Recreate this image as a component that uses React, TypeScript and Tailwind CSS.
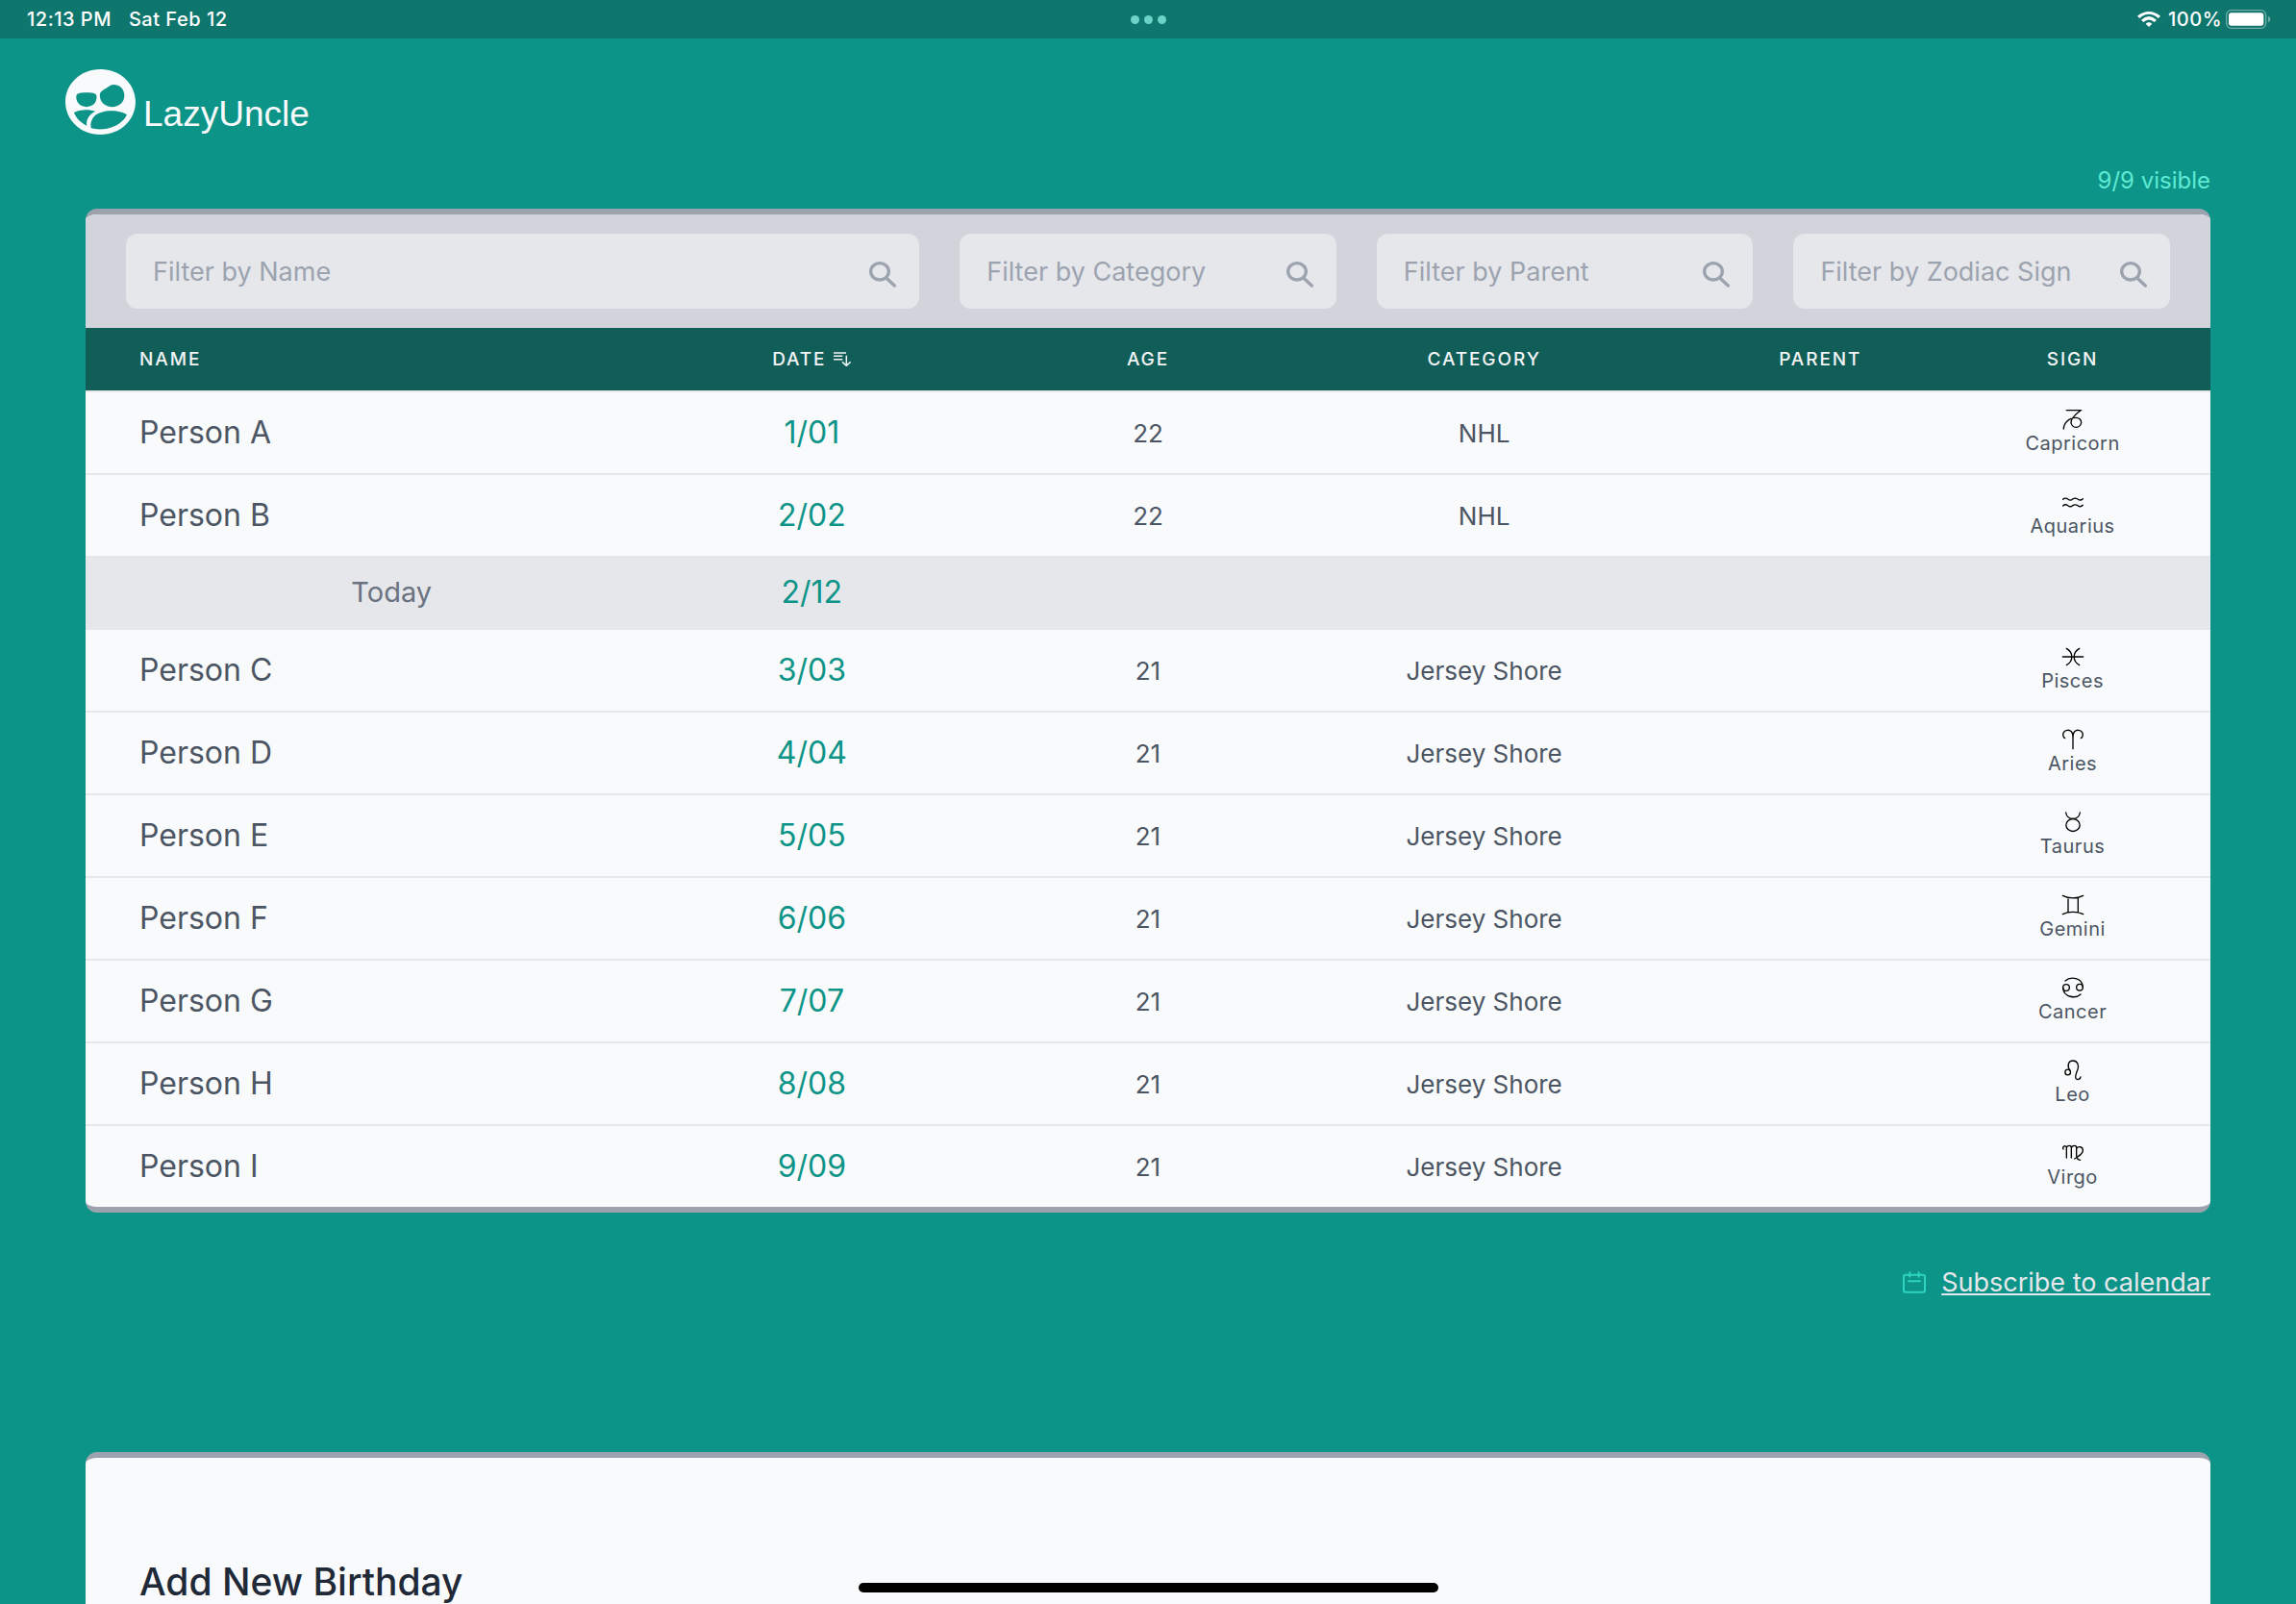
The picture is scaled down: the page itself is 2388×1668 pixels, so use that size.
import React from "react";

type Person = { name: string; date: string; age: number; category: string; parent: string; sign: string };

const people: Person[] = [
  { name: "Person A", date: "1/01", age: 22, category: "NHL", parent: "", sign: "Capricorn" },
  { name: "Person B", date: "2/02", age: 22, category: "NHL", parent: "", sign: "Aquarius" },
  { name: "Person C", date: "3/03", age: 21, category: "Jersey Shore", parent: "", sign: "Pisces" },
  { name: "Person D", date: "4/04", age: 21, category: "Jersey Shore", parent: "", sign: "Aries" },
  { name: "Person E", date: "5/05", age: 21, category: "Jersey Shore", parent: "", sign: "Taurus" },
  { name: "Person F", date: "6/06", age: 21, category: "Jersey Shore", parent: "", sign: "Gemini" },
  { name: "Person G", date: "7/07", age: 21, category: "Jersey Shore", parent: "", sign: "Cancer" },
  { name: "Person H", date: "8/08", age: 21, category: "Jersey Shore", parent: "", sign: "Leo" },
  { name: "Person I", date: "9/09", age: 21, category: "Jersey Shore", parent: "", sign: "Virgo" },
];

const zodiac: Record<string, React.ReactNode> = {
  Capricorn: <path d="M13 5H57C44 17 27 27 27 43a16 15 0 1 0 16-15C20 28 4 45 4 63" />,
  Aquarius: (
    <path d="M2 25C6 21 13 21 17 24C22 28 28 28 32 24C38 20 43 21 48 24C53 28 59 28 64 23M2 45C6 41 13 41 17 44C22 48 28 48 32 44C38 40 43 41 48 44C53 48 59 48 64 43" />
  ),
  Pisces: <path d="M1 33H65M13 7C35 20 35 46 13 59M53 7C31 20 31 46 53 59" />,
  Aries: (
    <path d="M8 29C2 26 1 17 4 11C9 2 22 2 28 8C32 12 33 18 33 28V62M58 29C64 26 65 17 62 11C57 2 44 2 38 8C34 12 33 18 33 28" />
  ),
  Taurus: (
    <>
      <ellipse cx="33" cy="42" rx="21.5" ry="19.5" />
      <path d="M11 3C13 15 22 22 33 22S53 15 55 3" />
    </>
  ),
  Gemini: <path d="M1 4C20 14 46 14 65 4M1 62C20 53 46 53 65 62M18 10V56M49 10V56" />,
  Cancer: (
    <>
      <circle cx="12" cy="33" r="10" />
      <circle cx="54" cy="32" r="10" />
      <path d="M9 12C24-2 63 0 64 32M2 33C4 65 42 68 57 54" />
    </>
  ),
  Leo: (
    <>
      <circle cx="17" cy="39" r="8.5" />
      <path d="M24 34C14 20 18 3 33 3S52 18 48 30C43 42 39 52 42 58C46 64 55 62 57 54" />
    </>
  ),
  Virgo: (
    <path d="M3 21C-1 13 9 7 13 15V48M13 16C16 9 28 8 28 16V48M28 16C32 9 44 8 44 16V40C44 50 48 55 56 55M44 19C50 10 65 13 64 26C63 38 50 43 38 51" />
  ),
};

function ZodiacIcon({ sign }: { sign: string }) {
  return (
    <svg className="h-[22px] w-[22px] overflow-visible text-black" viewBox="0 0 66 66" fill="none" stroke="currentColor" strokeWidth="4" strokeLinecap="round" aria-hidden="true">
      {zodiac[sign]}
    </svg>
  );
}

function StatusBar() {
  return (
    <div className="relative flex h-10 items-center justify-between bg-[#0f766e] pr-[26px] pl-7 text-[20px] font-medium tracking-wide text-white">
      <div className="flex gap-[18px]">
        <span>12:13 PM</span>
        <span>Sat Feb 12</span>
      </div>
      <div className="absolute inset-0 flex items-center justify-center gap-[5px]">
        <span className="h-[9px] w-[9px] rounded-full bg-[#6dd3c8]" />
        <span className="h-[9px] w-[9px] rounded-full bg-[#6dd3c8]" />
        <span className="h-[9px] w-[9px] rounded-full bg-[#6dd3c8]" />
      </div>
      <div className="flex items-center">
        <svg className="mr-2 h-4 w-6" viewBox="0 0 72 48" fill="currentColor" aria-hidden="true">
          <path d="M36 48 26 38Q36 30 46 38Z" />
          <path d="M12 26Q36 4 60 26L53 33Q36 18 19 33Z" />
          <path d="M0 14Q36-14 72 14L65 21Q36-4 7 21Z" />
        </svg>
        <span>100%</span>
        <svg className="ml-1 h-5 w-[47px]" viewBox="0 0 141 60" aria-hidden="true">
          <rect x="2" y="2" width="123" height="56" rx="15" fill="none" stroke="#6fada8" strokeWidth="4" />
          <rect x="9" y="10" width="109" height="40" rx="8" fill="white" />
          <path d="M132 20q7 3 7 10t-7 10z" fill="#6fada8" />
        </svg>
      </div>
    </div>
  );
}

function Logo() {
  return (
    <a href="#" className="flex items-end gap-2 text-gray-50">
      <svg className="h-[68px] w-[73px]" viewBox="204 216 220 205" fill="currentColor" fillRule="evenodd" aria-hidden="true">
        <path d="M314 216C376 216 424 262 424 318.500S376 421 314 421S204 375 204 318.500S252 216 314 216ZM238 303C238 292 245 289 270 289S302 292 302 303C302 323 288 334 270 334S238 322 238 303ZM347 266C360 260 389 268 389 299C389 320 371 334 351 334C330 334 312 320 312 298C312 285 322 281 331 276S341 269 347 266ZM231 352C245 342 280 340 298 348C280 357 268 372 271 393C252 384 238 370 231 352ZM397 359C380 345 320 338 293 365C283 378 282 390 285 401C320 411 375 400 397 359Z" />
      </svg>
      <span className="font-['Liberation_Sans',Arial,sans-serif] text-[37px] leading-[42px]">LazyUncle</span>
    </a>
  );
}

function FilterBox({ label, wide = false }: { label: string; wide?: boolean }) {
  return (
    <label className={wide ? "relative col-span-2" : "relative"}>
      <input
        type="text"
        aria-label={label}
        placeholder={label}
        className="h-[78px] w-full rounded-xl bg-[#e5e7eb] pr-16 pl-7 text-[27px] text-[#4b5563] outline-none placeholder:text-[#9ca3af]"
      />
      <svg className="pointer-events-none absolute top-7 right-6 h-7 w-7" viewBox="0 0 84 84" fill="none" stroke="#9ca3af" strokeWidth="10" strokeLinecap="round" aria-hidden="true">
        <ellipse cx="33" cy="34" rx="28" ry="26" />
        <path d="M53 54 79 78" />
      </svg>
    </label>
  );
}

function HeaderButton({ children }: { children: React.ReactNode }) {
  return <button className="inline-flex items-center text-[19px] leading-7 font-medium tracking-widest uppercase">{children}</button>;
}

function SortIcon() {
  return (
    <svg className="ml-2 h-[15px] w-[18px]" viewBox="0 0 54 45" fill="none" stroke="currentColor" strokeWidth="4.500" aria-hidden="true">
      <path d="M0 3H39M0 13H28M0 23H28M40 11V42M27 31 40 43 53 31" />
    </svg>
  );
}

function TodayRow() {
  return (
    <tr className="grid h-[75px] grid-cols-12 items-center bg-[#e5e7eb] px-14 text-center">
      <td className="col-span-3 text-[29px] text-[#6b7280]">Today</td>
      <td className="col-span-2 text-[32px] text-[#0d9488]">2/12</td>
      <td className="col-span-7" />
    </tr>
  );
}

function PersonRow({ person }: { person: Person }) {
  return (
    <tr className="grid h-[86px] grid-cols-12 items-center border-t-2 border-[#e5e7eb] px-14 text-center text-[26px]">
      <td className="col-span-3 text-left text-[32px]">{person.name}</td>
      <td className="col-span-2 text-[32px] text-[#0d9488]">{person.date}</td>
      <td className="col-span-2">{person.age}</td>
      <td className="col-span-2">{person.category}</td>
      <td className="col-span-2">{person.parent}</td>
      <td className="flex flex-col items-center text-[20px] leading-7 tracking-wide">
        <ZodiacIcon sign={person.sign} />
        <span>{person.sign}</span>
      </td>
    </tr>
  );
}

function BirthdayTable() {
  return (
    <section className="overflow-hidden rounded-xl border-y-6 border-[#9ca3af] bg-[#f9fafb]">
      <div className="grid grid-cols-5 gap-[42px] bg-[#d1d5db] px-[42px] py-5">
        <FilterBox label="Filter by Name" wide />
        <FilterBox label="Filter by Category" />
        <FilterBox label="Filter by Parent" />
        <FilterBox label="Filter by Zodiac Sign" />
      </div>
      <table className="block text-[#4b5563]">
        <thead className="block bg-[#115e59] text-[#f3f4f6]">
          <tr className="grid h-[65px] grid-cols-12 items-center px-14">
            <th className="col-span-3 text-left"><HeaderButton>Name</HeaderButton></th>
            <th className="col-span-2"><HeaderButton>Date<SortIcon /></HeaderButton></th>
            <th className="col-span-2"><HeaderButton>Age</HeaderButton></th>
            <th className="col-span-2"><HeaderButton>Category</HeaderButton></th>
            <th className="col-span-2"><HeaderButton>Parent</HeaderButton></th>
            <th><HeaderButton>Sign</HeaderButton></th>
          </tr>
        </thead>
        <tbody className="block">
          {people.map((person, i) => (
            <React.Fragment key={person.name}>
              {i === 2 && <TodayRow />}
              <PersonRow person={person} />
            </React.Fragment>
          ))}
        </tbody>
      </table>
    </section>
  );
}

export default function App() {
  return (
    <div className="h-screen overflow-hidden bg-[#0d9488] font-[Inter,'Open_Sans',sans-serif]">
      <StatusBar />
      <header className="flex px-[68px] pt-8">
        <Logo />
      </header>
      <main className="px-[89px] pt-8">
        <p className="mb-[13px] text-right text-[24px] leading-8 text-[#5eead4]">9/9 visible</p>
        <BirthdayTable />
        <div className="mt-[53px] flex items-center justify-end gap-4 text-[27px] leading-10">
          <svg className="h-6 w-6" viewBox="0 0 72 72" fill="none" stroke="#2dd4bf" strokeWidth="6" strokeLinecap="round" aria-hidden="true">
            <rect x="3" y="11" width="66" height="54" rx="6" />
            <path d="M22 4V17M50 4V17M18 31H54" />
          </svg>
          <a href="#calendar" className="text-[#e5e7eb] underline">Subscribe to calendar</a>
        </div>
        <section className="mt-[156px] rounded-xl border-y-6 border-[#9ca3af] bg-[#f9fafb] px-14 pt-[105px] pb-14">
          <h2 className="text-[39px] leading-[48px] font-medium text-[#1f2937]">Add New Birthday</h2>
        </section>
      </main>
      <div className="fixed inset-x-0 bottom-3 flex justify-center">
        <div className="h-[10px] w-1/4 min-w-[603px] rounded-full bg-black" />
      </div>
    </div>
  );
}
